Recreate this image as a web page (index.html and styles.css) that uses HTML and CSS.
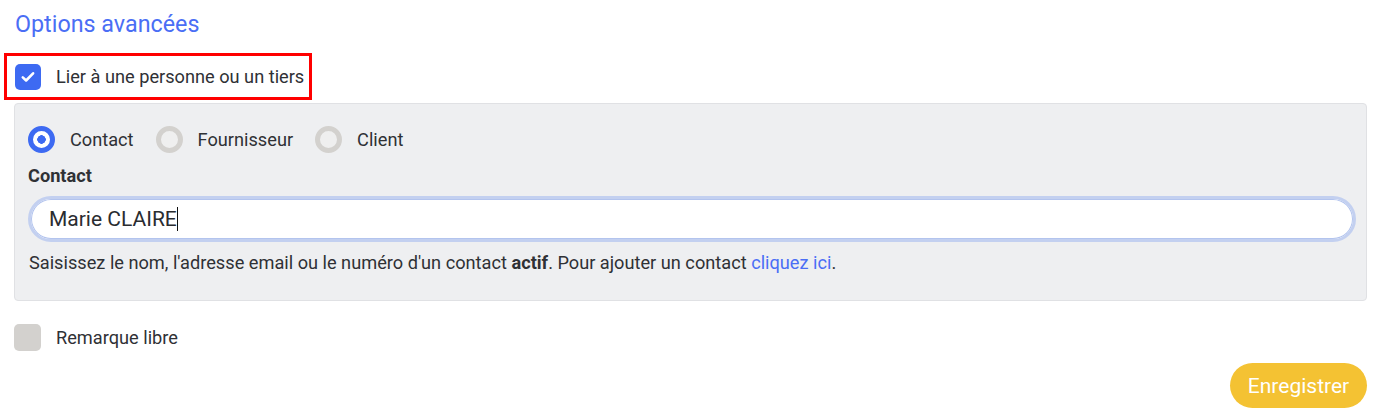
FILE: index.html
```html
<!DOCTYPE html>
<html lang="fr">
<head>
    <meta charset="UTF-8">
    <meta name="viewport" content="width=device-width, initial-scale=1.0">
    <title>Options avancées</title>
    <link rel="stylesheet" href="styles.css">
</head>
<body>
    <h2 class="section-title">Options avancées</h2>

    <div class="highlight">
        <label class="check">
            <span class="check-box checked">
                <svg width="18" height="18" viewBox="0 0 18 18"><path d="M3.8 9.4l3.3 3.1 7-7.2" fill="none" stroke="#fff" stroke-width="2.6" stroke-linecap="round" stroke-linejoin="round"/></svg>
            </span>
            <span class="check-label">Lier à une personne ou un tiers</span>
        </label>
    </div>

    <div class="panel">
        <div class="radios">
            <label class="radio"><span class="radio-dot checked"></span>Contact</label>
            <label class="radio"><span class="radio-dot"></span>Fournisseur</label>
            <label class="radio"><span class="radio-dot"></span>Client</label>
        </div>
        <div class="field-label">Contact</div>
        <div class="input">Marie CLAIRE<span class="caret"></span></div>
        <p class="help">Saisissez le nom, l'adresse email ou le numéro d'un contact <b>actif</b>. Pour ajouter un contact <a href="#">cliquez ici</a>.</p>
    </div>

    <label class="check remark">
        <span class="check-box"></span>
        <span class="check-label">Remarque libre</span>
    </label>

    <div class="actions">
        <button class="save">Enregistrer</button>
    </div>
</body>
</html>
```

FILE: styles.css
```css
body {
    font-family: 'Roboto', 'Liberation Sans', sans-serif;
    color: #2f3135;
    margin: 0;
    padding: 0 16px 0 14px;
    background: #fff;
    font-size: 18.2px;
}
.section-title {
    margin: 0;
    padding: 10px 0 0 1px;
    height: 53px;
    box-sizing: border-box;
    font-size: 23.3px;
    font-weight: 400;
    color: #4a6ef5;
    line-height: 28px;
}
.highlight {
    display: inline-block;
    margin-left: -10px;
    border: 3px solid #f00;
    padding: 8px 5px 7px 8px;
}
.check {
    display: flex;
    align-items: center;
    gap: 15px;
    cursor: pointer;
}
.check-box {
    width: 26px;
    height: 26px;
    border-radius: 5px;
    background: #d3d1ce;
    display: flex;
    align-items: center;
    justify-content: center;
}
.check-box.checked {
    background: #3d6af2;
}
.check-label {
    line-height: 26px;
}
.panel {
    margin-top: 3px;
    background: #eeeff1;
    border: 1px solid #e0e1e4;
    border-radius: 4px;
    padding: 22px 10px 16px 13px;
    height: 198px;
    box-sizing: border-box;
}
.radios {
    display: flex;
    align-items: center;
}
.radio {
    display: flex;
    align-items: center;
    margin-right: 22px;
    line-height: 27px;
}
.radio-dot {
    width: 27px;
    height: 27px;
    border-radius: 50%;
    box-sizing: border-box;
    border: 5px solid #d3d1ce;
    background: #efefef;
    margin-right: 15px;
}
.radio-dot.checked {
    border-color: #3d6af2;
    background: radial-gradient(circle, #3d6af2 0 4px, #fff 4.5px);
}
.field-label {
    font-weight: 700;
    margin-top: 11px;
    line-height: 24px;
}
.input {
    margin-top: 8px;
    height: 46px;
    box-sizing: border-box;
    border: 3px solid #c3d0f0;
    border-radius: 23px;
    background: #fff;
    box-shadow: inset 0 0 0 1px #b3c4ee;
    font-size: 21px;
    line-height: 40px;
    padding-left: 18px;
    color: #2a2c30;
    display: flex;
    align-items: center;
}
.caret {
    display: inline-block;
    width: 1px;
    height: 24px;
    background: #111;
}
.help {
    margin: 9px 0 0 1px;
    line-height: 24px;
}
.help a {
    color: #4a6ef5;
    text-decoration: none;
}
.remark {
    margin-top: 23px;
}
.remark .check-box {
    width: 27px;
    height: 27px;
}
.actions {
    display: flex;
    justify-content: flex-end;
    margin-top: 12px;
}
.save {
    background: #f4c233;
    color: #fff;
    border: none;
    height: 45px;
    width: 137px;
    border-radius: 23px;
    font-family: 'Roboto', 'Liberation Sans', sans-serif;
    font-size: 21px;
    cursor: pointer;
}
```
